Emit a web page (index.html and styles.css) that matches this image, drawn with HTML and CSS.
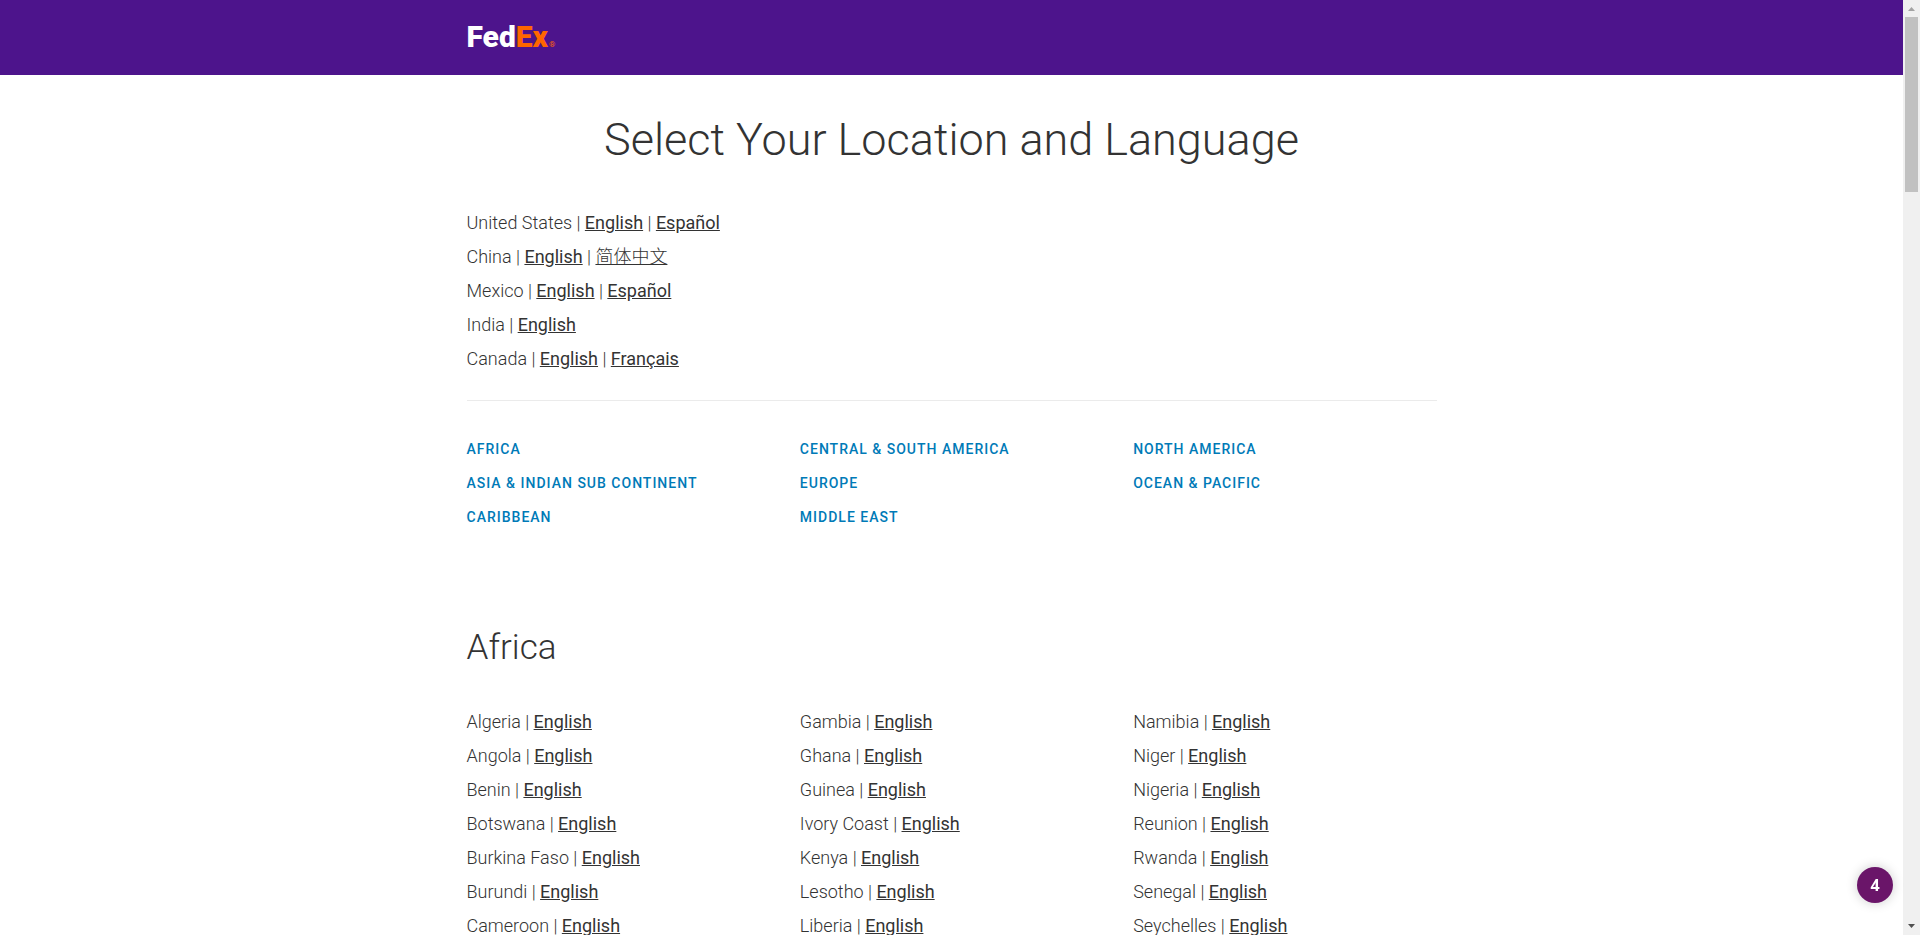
FILE: index.html
```html
<!DOCTYPE html>
<html lang="en">
<head>
<meta charset="utf-8">
<meta name="viewport" content="width=device-width, initial-scale=1">
<title>FedEx | Select Your Location and Language</title>
<link rel="stylesheet" href="styles.css">
</head>
<body>
<div class="page">
  <header class="header">
    <div class="container">
      <a class="logo" href="#" aria-label="FedEx"><span class="logo-fed">Fed</span><span class="logo-ex">Ex</span><span class="logo-reg">®</span></a>
    </div>
  </header>
  <main class="container">
    <h1 class="title">Select Your Location and Language</h1>
    <ul class="list">
      <li>United States | <a href="#">English</a> | <a href="#">Español</a></li>
      <li>China | <a href="#">English</a> | <a href="#" lang="zh-CN">简体中文</a></li>
      <li>Mexico | <a href="#">English</a> | <a href="#">Español</a></li>
      <li>India | <a href="#">English</a></li>
      <li>Canada | <a href="#">English</a> | <a href="#">Français</a></li>
    </ul>
    <hr class="divider">
    <nav class="columns regions" aria-label="Regions">
      <ul class="list">
        <li><a href="#africa">AFRICA</a></li>
        <li><a href="#">ASIA &amp; INDIAN SUB CONTINENT</a></li>
        <li><a href="#">CARIBBEAN</a></li>
      </ul>
      <ul class="list">
        <li><a href="#">CENTRAL &amp; SOUTH AMERICA</a></li>
        <li><a href="#">EUROPE</a></li>
        <li><a href="#">MIDDLE EAST</a></li>
      </ul>
      <ul class="list">
        <li><a href="#">NORTH AMERICA</a></li>
        <li><a href="#">OCEAN &amp; PACIFIC</a></li>
      </ul>
    </nav>
    <h2 class="region-title" id="africa">Africa</h2>
    <div class="columns">
      <ul class="list">
        <li>Algeria | <a href="#">English</a></li>
        <li>Angola | <a href="#">English</a></li>
        <li>Benin | <a href="#">English</a></li>
        <li>Botswana | <a href="#">English</a></li>
        <li>Burkina Faso | <a href="#">English</a></li>
        <li>Burundi | <a href="#">English</a></li>
        <li>Cameroon | <a href="#">English</a></li>
      </ul>
      <ul class="list">
        <li>Gambia | <a href="#">English</a></li>
        <li>Ghana | <a href="#">English</a></li>
        <li>Guinea | <a href="#">English</a></li>
        <li>Ivory Coast | <a href="#">English</a></li>
        <li>Kenya | <a href="#">English</a></li>
        <li>Lesotho | <a href="#">English</a></li>
        <li>Liberia | <a href="#">English</a></li>
      </ul>
      <ul class="list">
        <li>Namibia | <a href="#">English</a></li>
        <li>Niger | <a href="#">English</a></li>
        <li>Nigeria | <a href="#">English</a></li>
        <li>Reunion | <a href="#">English</a></li>
        <li>Rwanda | <a href="#">English</a></li>
        <li>Senegal | <a href="#">English</a></li>
        <li>Seychelles | <a href="#">English</a></li>
      </ul>
    </div>
  </main>
</div>
<div class="scrollbar" aria-hidden="true">
  <svg class="arrow arrow-up" viewBox="0 0 7 4"><path d="M3.500 0L7 4H0z"/></svg>
  <div class="track"><div class="thumb"></div></div>
  <svg class="arrow" viewBox="0 0 7 4"><path d="M0 0h7L3.500 4z"/></svg>
</div>
<button class="badge" type="button">4</button>
</body>
</html>
```
FILE: styles.css
```css
* {
  box-sizing: border-box;
}

body {
  display: flex;
  height: 100vh;
  margin: 0;
  overflow: hidden;
  background: #fff;
  color: #333;
  font-family: Roboto, "Noto Sans CJK SC", sans-serif;
  font-size: 18px;
  font-weight: 300;
}

.page {
  flex: 1;
  min-width: 0;
  overflow: hidden;
}

.container {
  width: 100%;
  max-width: 970px;
  margin: 0 auto;
}

.header {
  display: flex;
  align-items: center;
  height: 75px;
  padding-top: 6px;
  background: #4d148c;
}

.logo {
  display: inline-flex;
  align-items: baseline;
  color: #fff;
  font-size: 30px;
  font-weight: 900;
  line-height: 36px;
  text-decoration: none;
}

.logo-ex,
.logo-reg {
  color: #f60;
}

.logo-reg {
  margin-left: 1px;
  font-size: 8px;
  font-weight: 400;
}

.title {
  margin: 37px 0 38px;
  font-size: 45px;
  font-weight: 300;
  line-height: 56px;
  text-align: center;
}

.list {
  margin: 0;
  padding: 0;
  line-height: 34px;
  list-style: none;
}

.list a {
  color: #333;
  font-weight: 400;
}

.list a:lang(zh) {
  font-weight: 300;
}

.divider {
  height: 1px;
  margin: 24px 0 31px;
  border: 0;
  background: #ebebeb;
}

.columns {
  display: grid;
  grid-template-columns: repeat(3, 1fr);
  column-gap: 30px;
}

.regions {
  font-size: 14px;
}

.regions a {
  color: #007ab7;
  font-weight: 500;
  letter-spacing: 1px;
  text-decoration: none;
}

.region-title {
  margin: 91px 0 34px;
  font-size: 35px;
  font-weight: 300;
  line-height: 46px;
}

.scrollbar {
  display: flex;
  flex-direction: column;
  align-items: center;
  width: 17px;
  padding: 7px 2px;
  background: #f0f0f0;
}

.arrow {
  width: 7px;
  height: 4px;
  fill: #505050;
}

.arrow-up {
  fill: #a3a3a3;
}

.track {
  flex: 1;
  width: 100%;
  padding: 6px 0;
}

.thumb {
  height: 175px;
  background: #c1c1c1;
}

.badge {
  position: fixed;
  right: 27px;
  bottom: 32px;
  width: 36px;
  height: 36px;
  padding: 0;
  border: 0;
  border-radius: 50%;
  background: #6a1569;
  box-shadow: 0 0 12px rgba(0, 0, 0, 0.2);
  color: #fff;
  font-family: "Open Sans", sans-serif;
  font-size: 16px;
  font-weight: 700;
}
```
